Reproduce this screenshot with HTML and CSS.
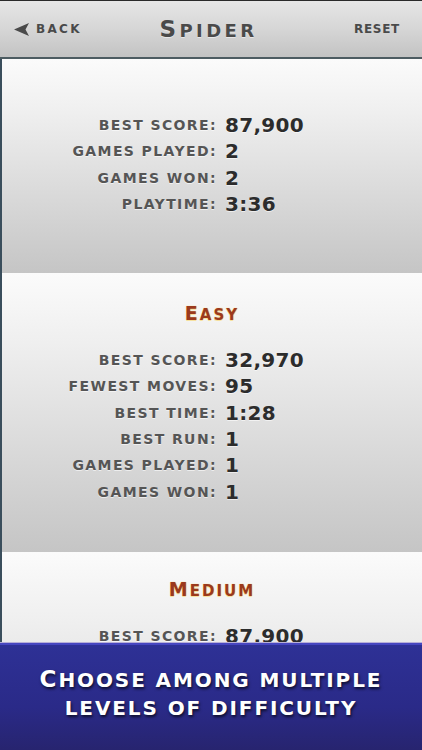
FILE: index.html
```html
<!DOCTYPE html>
<html>
<head>
<meta charset="utf-8">
<link rel="stylesheet" href="styles.css">
</head>
<body>
<div class="page">
  <header class="topbar">
    <div class="back">
      <svg class="arrow" width="15" height="13" viewBox="0 0 15 13"><polygon points="0,6.5 15,0 11.5,6.5 15,13" fill="#4a4a4a"/></svg>
      <span>back</span>
    </div>
    <div class="title">Spider</div>
    <div class="reset">reset</div>
  </header>
  <main class="content">
    <section class="card card-overall">
      <div class="stats">
        <div class="label">best score:</div><div class="value">87,900</div>
        <div class="label">games played:</div><div class="value">2</div>
        <div class="label">games won:</div><div class="value">2</div>
        <div class="label">playtime:</div><div class="value">3:36</div>
      </div>
    </section>
    <section class="card card-easy">
      <h2 class="level">Easy</h2>
      <div class="stats">
        <div class="label">best score:</div><div class="value">32,970</div>
        <div class="label">fewest moves:</div><div class="value">95</div>
        <div class="label">best time:</div><div class="value">1:28</div>
        <div class="label">best run:</div><div class="value">1</div>
        <div class="label">games played:</div><div class="value">1</div>
        <div class="label">games won:</div><div class="value">1</div>
      </div>
    </section>
    <section class="card card-medium">
      <h2 class="level">Medium</h2>
      <div class="stats">
        <div class="label">best score:</div><div class="value">87,900</div>
        <div class="label">fewest moves:</div><div class="value">95</div>
      </div>
    </section>
  </main>
  <footer class="banner">
    <p class="line first">Choose among multiple</p>
    <p class="line">levels of difficulty</p>
  </footer>
</div>
</body>
</html>
```

FILE: styles.css
```css
html, body {
  margin: 0;
  padding: 0;
}
body {
  width: 422px;
  height: 750px;
  overflow: hidden;
  font-family: "DejaVu Sans", "Liberation Sans", sans-serif;
  background: #3a4e5c;
}
.page {
  display: flex;
  flex-direction: column;
  height: 750px;
}
.topbar {
  flex: none;
  height: 56px;
  border-top: 1px solid #2a2a2a;
  border-bottom: 2px solid #4d5c62;
  background: linear-gradient(#e6e6e6, #d6d6d6 50%, #c3c3c3);
  display: grid;
  grid-template-columns: 1fr auto 1fr;
  align-items: center;
  padding: 0 22px 0 14px;
  color: #4a4a4a;
  font-weight: bold;
  text-transform: uppercase;
}
.back {
  display: flex;
  align-items: center;
  gap: 7px;
  font-size: 12px;
  letter-spacing: 2.3px;
}
.arrow { display: block; }
.title {
  font-size: 18px;
  letter-spacing: 3.4px;
  margin-right: -3px;
  color: #4a4a4a;
  text-shadow: 0 1px 0 rgba(255,255,255,0.5);
}
.title::first-letter {
  font-size: 23px;
}
.reset {
  justify-self: end;
  font-size: 12px;
  letter-spacing: 0.7px;
}
.content {
  flex: 1;
  overflow: hidden;
  margin-left: 2px;
  background: #c4c4c4;
}
.card {
  background: linear-gradient(#fbfbfb, #efefef 25%, #c5c5c5);
}
.card-overall {
  height: 214px;
  padding-top: 53px;
  box-sizing: border-box;
}
.card-easy {
  height: 279px;
  padding-top: 25px;
  box-sizing: border-box;
}
.card-medium {
  height: 279px;
  padding-top: 22px;
  box-sizing: border-box;
}
.level {
  margin: 0 0 19px;
  height: 30px;
  line-height: 30px;
  text-align: center;
  font-size: 15px;
  font-weight: bold;
  text-transform: uppercase;
  letter-spacing: 2px;
  color: #9b391d;
  text-shadow: 0 0 1px #f7dc8c, 0 0 1px #f7dc8c, 0 1px 0 #f7e3a3;
}
.level::first-letter {
  font-size: 19px;
}
.stats {
  display: grid;
  grid-template-columns: 215px 1fr;
  column-gap: 8px;
  grid-auto-rows: 26.3px;
  align-items: center;
}
.label {
  text-align: right;
  font-size: 14px;
  font-weight: bold;
  text-transform: uppercase;
  letter-spacing: 1.4px;
  color: #555555;
  text-shadow: 0 1px 0 rgba(255,255,255,0.6);
}
.value {
  font-size: 20px;
  font-weight: bold;
  color: #2c2c2c;
  letter-spacing: 0.3px;
  text-shadow: 0 1px 0 rgba(255,255,255,0.6);
}
.banner {
  flex: none;
  height: 108px;
  border-top: 1px solid #b8b0d8;
  box-shadow: inset 0 2px 0 #4646c0;
  background: linear-gradient(#2e3196, #2a2a88 60%, #27246f);
  display: flex;
  flex-direction: column;
  align-items: center;
  justify-content: center;
  padding-bottom: 6px;
  box-sizing: border-box;
}
.line {
  margin: 0;
  text-align: center;
  color: #ffffff;
  font-size: 20px;
  line-height: 28px;
  font-weight: bold;
  text-transform: uppercase;
  letter-spacing: 1.9px;
  text-shadow: 1px 2px 3px rgba(0,0,0,0.7);
  white-space: nowrap;
}
.line.first::first-letter {
  font-size: 23px;
}
```
